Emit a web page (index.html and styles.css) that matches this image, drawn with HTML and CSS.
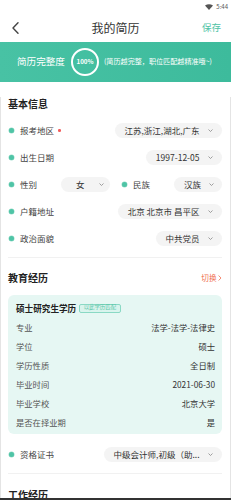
FILE: index.html
```html
<!DOCTYPE html>
<html lang="zh">
<head>
<meta charset="utf-8">
<title>我的简历</title>
<link rel="stylesheet" href="styles.css">
</head>
<body>
<div class="page">
  <div class="status">
    <svg class="wifi" width="8" height="6" viewBox="0 0 8 6"><path d="M0 1.6 Q4 -1.2 8 1.6 L4 6 Z" fill="#555"/></svg>
    <span class="time">5:44</span>
  </div>
  <div class="header">
    <div class="back"><svg width="7" height="12" viewBox="0 0 7 12"><path d="M6 0.8 L1 6 L6 11.2" fill="none" stroke="#444" stroke-width="1.4" stroke-linecap="round" stroke-linejoin="round"/></svg></div>
    <div class="title">我的简历</div>
    <div class="save">保存</div>
  </div>
  <div class="banner">
    <span class="b-label">简历完整度</span>
    <div class="ring">100%</div>
    <span class="b-tip">(简历越完整，职位匹配越精准哦~)</span>
  </div>
  <div class="content">
    <div class="sec-title">基本信息</div>
    <div class="row">
      <i class="dot"></i><span class="label">报考地区</span><i class="req"></i>
      <span class="pill">江苏,浙江,湖北,广东<svg class="chev" width="5" height="3" viewBox="0 0 5 3"><path d="M0.5 0.5 L2.5 2.5 L4.5 0.5" fill="none" stroke="#888" stroke-width="0.8"/></svg></span>
    </div>
    <div class="row">
      <i class="dot"></i><span class="label">出生日期</span>
      <span class="pill">1997-12-05<svg class="chev" width="5" height="3" viewBox="0 0 5 3"><path d="M0.5 0.5 L2.5 2.5 L4.5 0.5" fill="none" stroke="#888" stroke-width="0.8"/></svg></span>
    </div>
    <div class="row-pair">
      <div class="row">
        <i class="dot"></i><span class="label">性别</span>
        <span class="pill pill-sex">女<svg class="chev" width="5" height="3" viewBox="0 0 5 3"><path d="M0.5 0.5 L2.5 2.5 L4.5 0.5" fill="none" stroke="#888" stroke-width="0.8"/></svg></span>
      </div>
      <div class="row">
        <i class="dot"></i><span class="label">民族</span>
        <span class="pill pill-nation">汉族<svg class="chev" width="5" height="3" viewBox="0 0 5 3"><path d="M0.5 0.5 L2.5 2.5 L4.5 0.5" fill="none" stroke="#888" stroke-width="0.8"/></svg></span>
      </div>
    </div>
    <div class="row">
      <i class="dot"></i><span class="label">户籍地址</span>
      <span class="pill">北京 北京市 昌平区<svg class="chev" width="5" height="3" viewBox="0 0 5 3"><path d="M0.5 0.5 L2.5 2.5 L4.5 0.5" fill="none" stroke="#888" stroke-width="0.8"/></svg></span>
    </div>
    <div class="row">
      <i class="dot"></i><span class="label">政治面貌</span>
      <span class="pill">中共党员<svg class="chev" width="5" height="3" viewBox="0 0 5 3"><path d="M0.5 0.5 L2.5 2.5 L4.5 0.5" fill="none" stroke="#888" stroke-width="0.8"/></svg></span>
    </div>
    <div class="sep sep-1"></div>

    <div class="sec-head">
      <span class="sec-title">教育经历</span>
      <span class="switch">切换<svg width="4" height="6" viewBox="0 0 4 6"><path d="M0.6 0.5 L3 3 L0.6 5.5" fill="none" stroke="#f07050" stroke-width="0.8"/></svg></span>
    </div>
    <div class="card">
      <div class="card-title"><span>硕士研究生学历</span><span class="tag">以此学历匹配</span></div>
      <div class="erow"><span>专业</span><span class="val">法学-法学-法律史</span></div>
      <div class="erow"><span>学位</span><span class="val">硕士</span></div>
      <div class="erow"><span>学历性质</span><span class="val">全日制</span></div>
      <div class="erow"><span>毕业时间</span><span class="val">2021-06-30</span></div>
      <div class="erow"><span>毕业学校</span><span class="val">北京大学</span></div>
      <div class="erow"><span>是否在择业期</span><span class="val">是</span></div>
    </div>
    <div class="row row-cert">
      <i class="dot"></i><span class="label">资格证书</span>
      <span class="pill">中级会计师,初级（助...<svg class="chev" width="5" height="3" viewBox="0 0 5 3"><path d="M0.5 0.5 L2.5 2.5 L4.5 0.5" fill="none" stroke="#888" stroke-width="0.8"/></svg></span>
    </div>
    <div class="sep sep-2"></div>
    <div class="sec-title sec-work">工作经历</div>
  </div>
  <div class="navbar"></div>
</div>
</body>
</html>
```

FILE: styles.css
```css
* { box-sizing: border-box; margin: 0; padding: 0; }
html, body { background: #fff; }
body {
  font-family: "Noto Sans CJK SC", "Noto Sans", sans-serif;
  color: #333;
  width: 231px;
  height: 500px;
  overflow: hidden;
}
.page { width: 231px; height: 500px; overflow: hidden; }

.status {
  height: 14px;
  display: flex;
  justify-content: flex-end;
  align-items: center;
  gap: 3px;
  padding-right: 3px;
}
.time { font-size: 6px; color: #555; line-height: 1; }

.header {
  height: 28px;
  display: grid;
  grid-template-columns: 1fr auto 1fr;
  align-items: center;
}
.back { padding-left: 12px; display: flex; align-items: center; }
.title { font-size: 12px; color: #333; line-height: 1; }
.save { justify-self: end; padding-right: 10px; font-size: 9.5px; color: #4fc3a6; line-height: 1; }

.banner {
  height: 40px;
  display: flex;
  align-items: center;
  padding-left: 17px;
  background:
    radial-gradient(circle at 3px 72px, rgba(255,255,255,0.12) 0 20px, transparent 20.5px),
    linear-gradient(90deg, #48c2a4, #3dbb9c);
  color: #fff;
}
.b-label { font-size: 9.6px; line-height: 1; }
.ring {
  width: 28px;
  height: 28px;
  margin-left: 6px;
  border: 2px solid #fff;
  border-radius: 50%;
  display: flex;
  align-items: center;
  justify-content: center;
  font-size: 6.2px;
  font-weight: 700;
  line-height: 1;
}
.b-tip { margin-left: 5px; font-size: 7.1px; line-height: 1; white-space: nowrap; }

.content {
  height: 418px;
  border-left: 1px solid #e4e4e4;
  border-right: 1px solid #e4e4e4;
  padding: 0 8px 0 7px;
}

.sec-title {
  display: block;
  margin-top: 15px;
  margin-bottom: 6px;
  height: 14px;
  line-height: 14px;
  font-size: 10px;
  font-weight: 700;
  color: #222;
}

.row {
  height: 27px;
  display: flex;
  align-items: center;
  min-width: 0;
}
.dot {
  width: 5px;
  height: 5px;
  border-radius: 50%;
  background: #4fc4a6;
  box-shadow: 0 0 0 0.5px #9fdfcd;
  margin-left: 1px;
  margin-right: 6px;
  flex: none;
}
.label { font-size: 8.5px; color: #444; line-height: 1; white-space: nowrap; }
.req {
  width: 2.6px;
  height: 2.6px;
  border-radius: 50%;
  background: #f25d5d;
  margin-left: 4px;
  flex: none;
}
.pill {
  margin-left: auto;
  height: 15px;
  border-radius: 7.5px;
  background: #f4f4f4;
  display: flex;
  align-items: center;
  gap: 8px;
  padding: 0 9.5px 0 9.5px;
  font-size: 8.5px;
  color: #333;
  line-height: 1;
  white-space: nowrap;
}
.chev { flex: none; }

.row-pair {
  display: grid;
  grid-template-columns: 102px 101px;
  column-gap: 11px;
}
.pill-sex { width: 49px; padding: 0 10px 0 15px; gap: 14px; }
.pill-nation { width: 48px; padding: 0 9.5px 0 10px; gap: 8px; }

.sep { height: 1px; background: #f1f1f1; }
.sep-1 { margin-top: 5px; }

.sec-head {
  display: flex;
  align-items: center;
  justify-content: space-between;
  margin-top: 13px;
  height: 14px;
}
.sec-head .sec-title { margin: 0; }
.switch {
  display: flex;
  align-items: center;
  gap: 1.5px;
  font-size: 7.6px;
  color: #f07050;
  line-height: 1;
}

.card {
  margin-top: 10px;
  background: #e6f7f3;
  border-radius: 6px;
  padding: 6px 7px 2.5px 8px;
}
.card-title {
  height: 14px;
  display: flex;
  align-items: center;
  gap: 3px;
  margin-bottom: 2.5px;
  font-size: 8.6px;
  font-weight: 700;
  color: #222;
  line-height: 1;
}
.tag {
  height: 9px;
  display: flex;
  align-items: center;
  padding: 0 3.5px;
  border: 0.8px solid #8ad9c4;
  border-radius: 2px;
  background: #d9f4ed;
  font-size: 5.4px;
  font-weight: 400;
  color: #5cc7a9;
}
.erow {
  height: 19px;
  display: flex;
  align-items: center;
  justify-content: space-between;
  font-size: 8.3px;
  color: #555;
  line-height: 1;
}
.erow .val { color: #333; }

.row-cert { margin-top: 6.5px; }
.sep-2 { margin-top: 5.5px; }
.sec-work { margin-top: 14px; }

.navbar {
  position: fixed;
  left: 0;
  right: 0;
  bottom: 0;
  height: 2px;
  background: #333;
}
```
